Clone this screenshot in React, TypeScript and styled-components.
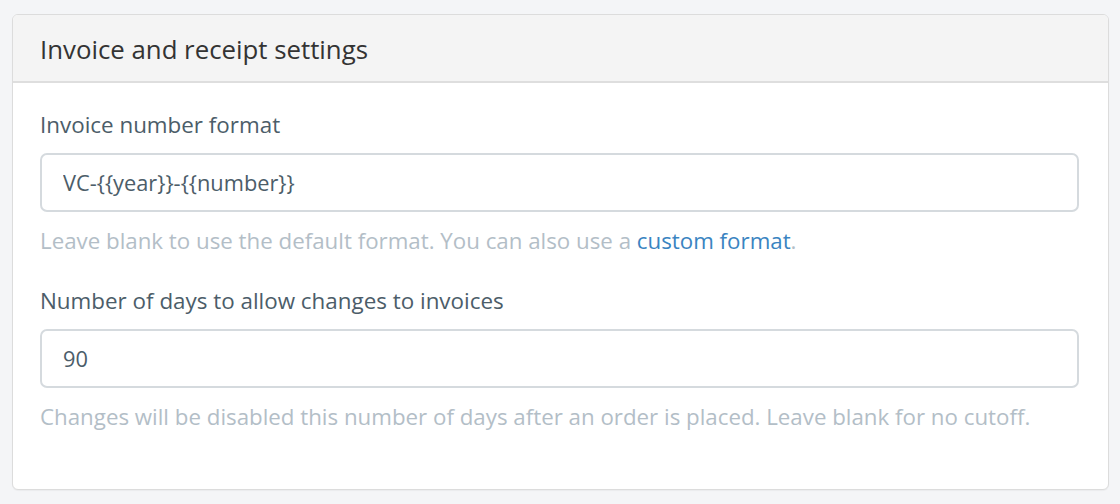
import React from "react";
import styled, { createGlobalStyle } from "styled-components";

const Global = createGlobalStyle`
  html, body {
    margin: 0;
    padding: 0;
    background: #f4f5f7;
  }
  body {
    font-family: "Open Sans", "Liberation Sans", sans-serif;
    -webkit-font-smoothing: antialiased;
  }
`;

const Page = styled.div`
  padding: 14px 11px 13px 12px;
`;

const Panel = styled.section`
  background: #fff;
  border: 1px solid #dcdcdc;
  border-radius: 6px;
  overflow: hidden;
  box-shadow: 0 1px 1px rgba(0, 0, 0, 0.04);
`;

const Header = styled.header`
  background: #f4f4f4;
  border-bottom: 2px solid #dedede;
  height: 66px;
  display: flex;
  align-items: center;
  padding: 0 27px;
`;

const Title = styled.h2`
  margin: 0;
  font-size: 25.8px;
  line-height: 32px;
  font-weight: 400;
  color: #333;
  position: relative;
  top: 1px;
`;

const Body = styled.div`
  padding: 27px 29px 57px 27px;
  display: flex;
  flex-direction: column;
  gap: 30px;
`;

const Field = styled.div`
  display: flex;
  flex-direction: column;
`;

const Label = styled.label`
  font-size: 22.4px;
  color: #4c5d69;
  line-height: 30px;
  margin-bottom: 13px;
`;

const Input = styled.input`
  box-sizing: border-box;
  height: 59px;
  border: 2px solid #d5dade;
  border-radius: 7px;
  padding: 0 21px;
  font-family: inherit;
  font-size: 21.8px;
  color: #4c5d69;
  background: #fff;
  outline: none;
`;

const Hint = styled.p`
  margin: 14px 0 0;
  font-size: 22.3px;
  line-height: 30px;
  color: #b3bec7;
`;

const Link = styled.a`
  color: #3a84c1;
  text-decoration: none;
`;

export default function App() {
  return (
    <>
      <Global />
      <Page>
        <Panel>
          <Header>
            <Title>Invoice and receipt settings</Title>
          </Header>
          <Body>
            <Field>
              <Label>Invoice number format</Label>
              <Input defaultValue="VC-{{year}}-{{number}}" />
              <Hint>
                Leave blank to use the default format. You can also use a{" "}
                <Link href="#">custom format</Link>.
              </Hint>
            </Field>
            <Field>
              <Label>Number of days to allow changes to invoices</Label>
              <Input defaultValue="90" />
              <Hint>
                Changes will be disabled this number of days after an order is
                placed. Leave blank for no cutoff.
              </Hint>
            </Field>
          </Body>
        </Panel>
      </Page>
    </>
  );
}
